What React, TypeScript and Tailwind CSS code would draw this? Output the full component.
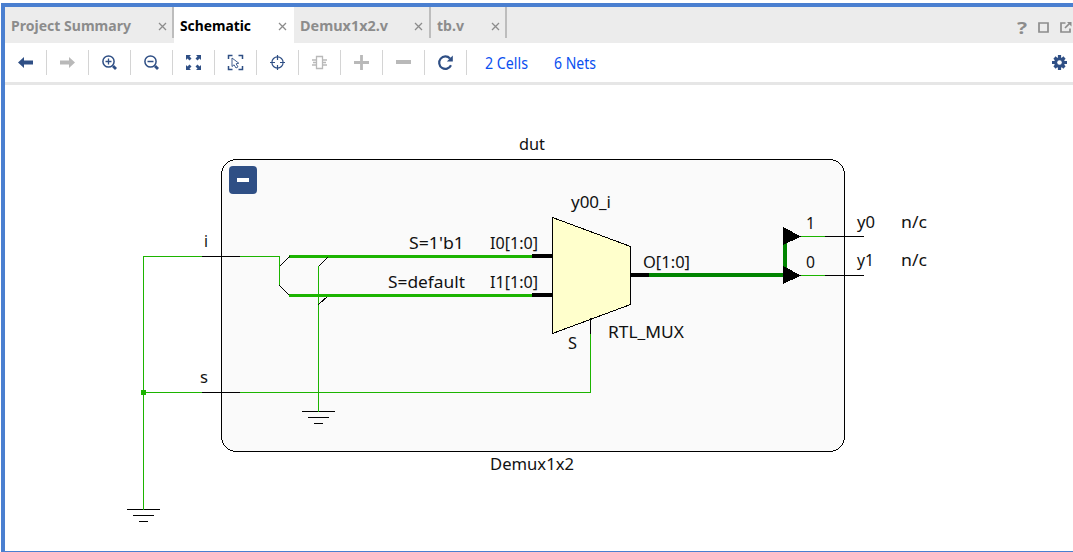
import React from "react";

const GREEN = "#1cb400";
const DARK_GREEN = "#008400";
const NAVY = "#2f4f85";
const GREY = "#b9b9b9";

function Close() {
  return (
    <svg width="9" height="9" viewBox="0 0 9 9" className="shrink-0">
      <path d="M1 1 8 8M8 1 1 8" stroke="#8c8c8c" strokeWidth="1.3" />
    </svg>
  );
}

function Label({ text, width, className = "" }: { text: string; width: number; className?: string }) {
  return (
    <svg width={width} height="24" className="block shrink-0 overflow-visible">
      <text x="0" y="17" textLength={width} lengthAdjust="spacingAndGlyphs" className={className}>
        {text}
      </text>
    </svg>
  );
}

function Tab({ text, width, box, active = false }: { text: string; width: number; box: string; active?: boolean }) {
  return (
    <div className={`${box} flex h-9 shrink-0 items-start justify-between pt-[7px] ${active ? "bg-white" : ""}`}>
      <Label text={text} width={width} className={`text-[15px] font-bold ${active ? "fill-black" : "fill-[#8c8c8c]"}`} />
      <div className="pt-[8px]">
        <Close />
      </div>
    </div>
  );
}

function Divider() {
  return <div className="h-[31px] w-[2px] shrink-0 bg-[#bdbdbd]" />;
}

function Tool({ children }: { children: React.ReactNode }) {
  return (
    <div className="flex h-[25px] w-[42px] shrink-0 items-start border-r border-[#d4d4d4] pt-[4px] pl-[12px]">
      <svg width="17" height="17" viewBox="-0.5 -0.5 17 17" fill="none">
        {children}
      </svg>
    </div>
  );
}

function Toolbar() {
  return (
    <div className="flex h-[39px] shrink-0 items-center bg-white">
      <Tool>
        <path d="M0.5 8 6.5 2.500v3.500H15.500v4H6.500v3.500z" fill={NAVY} />
      </Tool>
      <Tool>
        <path d="M15.500 8 9.500 2.500v3.500H0.500v4h9v3.500z" fill={GREY} />
      </Tool>
      <Tool>
        <circle cx="7" cy="7" r="5.600" stroke={NAVY} strokeWidth="1.500" />
        <path d="M4 7h6M7 4v6" stroke={NAVY} strokeWidth="1.300" />
        <path d="m11.500 11.500 3 3" stroke={NAVY} strokeWidth="2.800" />
      </Tool>
      <Tool>
        <circle cx="7" cy="7" r="5.600" stroke={NAVY} strokeWidth="1.500" />
        <path d="M4 7h6" stroke={NAVY} strokeWidth="1.500" />
        <path d="m11.500 11.500 3 3" stroke={NAVY} strokeWidth="2.800" />
      </Tool>
      <Tool>
        <path
          d="M.5 .5h5L4 2l2 2-2 2-2-2L.5 5.500zM15.500 .5v5L14 4l-2 2-2-2 2-2L10.500 .5zM.5 15.500v-5L2 12l2-2 2 2-2 2 1.500 1.500zM15.500 15.500h-5L12 14l-2-2 2-2 2 2 1.500-1.500z"
          fill={NAVY}
        />
      </Tool>
      <Tool>
        <path d="M1 4.500V1h4M11 1h4v3.500M1 11.500V15h4M11 15h4v-3.500" stroke={NAVY} strokeWidth="1.500" />
        <path d="M4.500 3.500v8.500l2.100-1.700 1.900 3.200 2-1.100-1.900-3.100 2.700-.6z" stroke={NAVY} strokeWidth=".9" />
      </Tool>
      <Tool>
        <circle cx="8" cy="8" r="5.600" stroke={NAVY} strokeWidth="1.200" />
        <path d="M8 .5v5M8 10.500v5M.5 8h5M10.500 8h5" stroke={NAVY} strokeWidth="1.200" />
      </Tool>
      <Tool>
        <path d="M5 2h6v12H5zM.5 5.500H5M.5 10.500H5M11 5.500h4.500M11 10.500h4.500M1.500 8H5M11 8h3.500" stroke={GREY} strokeWidth="1.300" />
      </Tool>
      <Tool>
        <path d="M.5 8h15M8 .5v15" stroke={GREY} strokeWidth="2.800" />
      </Tool>
      <Tool>
        <path d="M.5 7.500h15" stroke={GREY} strokeWidth="4" />
      </Tool>
      <Tool>
        <path d="M13.500 10.800A6.200 6.200 0 1 1 12.500 4" stroke={NAVY} strokeWidth="2.200" />
        <path d="M15.300 1v6H9.300z" fill={NAVY} />
      </Tool>
      <div className="flex gap-[26px] pt-[2px] pl-[18px]">
        <Label text="2 Cells" width={43} className="fill-[#0a50f0] text-[15.500px]" />
        <Label text="6 Nets" width={42} className="fill-[#0a50f0] text-[15.500px]" />
      </div>
      <svg width="17" height="17" viewBox="-8.500 -8.500 17 17" className="mr-[5px] ml-auto">
        <g stroke={NAVY} strokeWidth="3.200">
          <path d="M0-7.500V7.500M-7.500 0H7.500M-5-5 5 5M-5 5 5-5" />
        </g>
        <circle r="5.300" fill={NAVY} />
        <circle r="2.300" fill="white" />
      </svg>
    </div>
  );
}

const labels: [string, number, number, number][] = [
  ["dut", 519, 150, 26],
  ["y00_i", 571, 208, 40],
  ["S=1'b1", 409, 249, 55],
  ["I0[1:0]", 490, 249, 48],
  ["S=default", 388, 288, 77],
  ["I1[1:0]", 490, 288, 48],
  ["O[1:0]", 643, 268, 47],
  ["RTL_MUX", 608, 338, 76],
  ["S", 568, 349, 9],
  ["i", 204, 247, 4],
  ["s", 200, 383, 8],
  ["1", 806, 229, 9],
  ["0", 806, 268, 9],
  ["y0", 857, 228, 18],
  ["y1", 857, 266, 17],
  ["n/c", 901, 228, 26],
  ["n/c", 901, 266, 26],
  ["Demux1x2", 490, 470, 84],
];

function Schematic() {
  return (
    <svg width="1068" height="466" viewBox="5 85 1068 466" className="block shrink-0">
      <g shapeRendering="crispEdges" fill="none" stroke="black" strokeWidth="1">
        <rect x="221.500" y="159.500" width="623" height="292" rx="15" fill="#fafafa" />
        <g stroke={GREEN}>
          <path d="M143.500 509V256.500H202M240 256.500H279.500V285M318.500 266V411M143 392.500H202M240 392.500H590.500V334M801 236.500H825M801 275.500H825" />
          <path d="M289 256.500H532M289 295.500H532" strokeWidth="3" />
        </g>
        <rect x="141" y="390" width="5" height="5" fill={GREEN} stroke="none" />
        <path d="M202 256.500H240M202 392.500H240M825 236.500H864M825 275.500H864" />
        <path d="M279.500 266.500 289.500 256.500M279.500 285.500 289.500 295.500M318.500 266.500 327.500 257.500M318.500 304.500 327.500 296.500" />
        <path d="M302 411.500H335M308 417.500H329M314 423.500H323M127 509.500H160M133 515.500H154M139 521.500H148" />
        <path d="M318.500 405V412M143.500 503V510" stroke={GREEN} />
        <path d="M649 275H785V236" stroke={DARK_GREEN} strokeWidth="4" />
        <path d="M532 256H552M532 295H552M631 275H649" strokeWidth="4" />
        <path d="M552.500 217.500 630.500 246.500V304.500L552.500 333.500z" fill="#ffffcc" />
        <path d="M590.500 318V334" />
        <path d="M783 227 801 236.500 783 245zM783 266 801 275.500 783 284z" fill="black" stroke="none" />
      </g>
      <rect x="229" y="166" width="28" height="28" rx="4" fill={NAVY} />
      <rect x="237" y="178" width="12" height="4" fill="white" />
      <g fill="#111" className="text-[16.500px]">
        {labels.map(([text, x, y, width]) => (
          <text key={`${text}-${y}`} x={x} y={y} textLength={width} lengthAdjust="spacingAndGlyphs">
            {text}
          </text>
        ))}
      </g>
    </svg>
  );
}

export default function App() {
  return (
    <div className="h-[552px] w-[1073px] overflow-hidden bg-white pt-[3px] pl-px font-['Noto_Sans',sans-serif]">
      <div className="flex h-[549px] flex-col border-t-4 border-b border-l-4 border-[#4a7fd0] bg-white">
        <div className="flex h-9 shrink-0 bg-[#ececec]">
          <Tab text="Project Summary" width={120} box="w-[167px] pl-[6px] pr-[5px]" />
          <Divider />
          <Tab text="Schematic" width={71} box="w-[120px] pl-[6px] pr-[7px]" active />
          <Tab text="Demux1x2.v" width={88} box="w-[135px] pl-[6px] pr-[6px]" />
          <Divider />
          <Tab text="tb.v" width={27} box="w-[74px] pl-[6px] pr-[5px]" />
          <Divider />
          <div className="ml-auto flex text-[#8c8c8c]">
            <div className="mt-[10px] mr-[11px]">
              <Label text="?" width={10} className="fill-[#8c8c8c] text-[16px] font-bold" />
            </div>
            <svg width="35" height="14" viewBox="0 0 35 14" fill="none" stroke="currentColor" strokeWidth="1.700" className="mt-[14px]">
              <path d="M1 2h9v9H1z" />
              <path d="M27.500 2H23v9h9V7.500M27 7l5-5" />
              <path d="M29 1h4.500v4.500z" fill="currentColor" stroke="none" />
            </svg>
          </div>
        </div>
        <Toolbar />
        <div className="h-[3px] shrink-0 bg-[#e6e6e6]" />
        <Schematic />
      </div>
    </div>
  );
}
